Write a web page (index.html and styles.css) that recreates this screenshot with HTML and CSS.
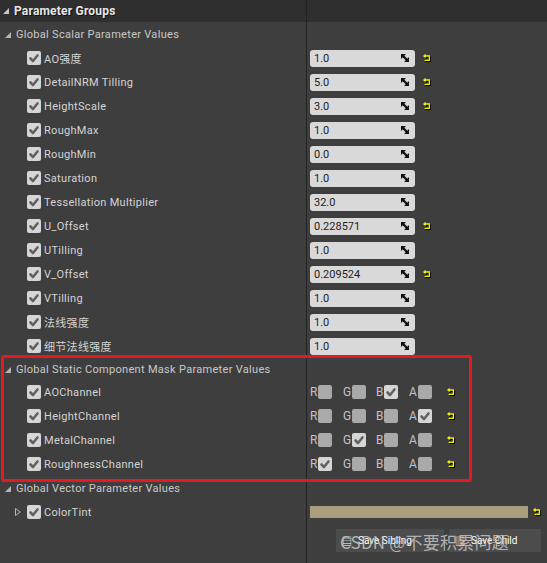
FILE: index.html
```html
<!DOCTYPE html>
<html>
<head>
<meta charset="utf-8">
<link rel="stylesheet" href="styles.css">
</head>
<body>
<div class="panel">
  <div class="header">
    <div class="hl"><svg class="tri" width="6" height="6" viewBox="0 0 6 6"><polygon points="0,6 6,6 6,0"/></svg><span>Parameter Groups</span></div>
    <div class="hr"></div>
  </div>

  <div class="row section"><div class="l"><svg class="tri" width="6" height="6" viewBox="0 0 6 6"><polygon points="0,6 6,6 6,0"/></svg>Global Scalar Parameter Values</div><div class="r"></div></div>

  <div class="row"><div class="l"><span class="cb on"><svg viewBox="0 0 14 14"><path d="M3.5 7.5 L6 10 L10.5 4.5"/></svg></span>AO强度</div><div class="r"><div class="val">1.0<svg class="spin" viewBox="0 0 8 8"><path d="M0 0 H5 L0 5 Z M8 8 V3 L3 8 Z"/><path class="ln" d="M1 1 L7 7"/></svg></div><svg class="reset" viewBox="0 0 8 8"><path d="M2.6 0.6 L1 2 L2.6 3.4 M1 2 H6.4 V6.4 H1.6"/></svg></div></div>
  <div class="row"><div class="l"><span class="cb on"><svg viewBox="0 0 14 14"><path d="M3.5 7.5 L6 10 L10.5 4.5"/></svg></span>DetailNRM Tilling</div><div class="r"><div class="val">5.0<svg class="spin" viewBox="0 0 8 8"><path d="M0 0 H5 L0 5 Z M8 8 V3 L3 8 Z"/><path class="ln" d="M1 1 L7 7"/></svg></div><svg class="reset" viewBox="0 0 8 8"><path d="M2.6 0.6 L1 2 L2.6 3.4 M1 2 H6.4 V6.4 H1.6"/></svg></div></div>
  <div class="row"><div class="l"><span class="cb on"><svg viewBox="0 0 14 14"><path d="M3.5 7.5 L6 10 L10.5 4.5"/></svg></span>HeightScale</div><div class="r"><div class="val">3.0<svg class="spin" viewBox="0 0 8 8"><path d="M0 0 H5 L0 5 Z M8 8 V3 L3 8 Z"/><path class="ln" d="M1 1 L7 7"/></svg></div><svg class="reset" viewBox="0 0 8 8"><path d="M2.6 0.6 L1 2 L2.6 3.4 M1 2 H6.4 V6.4 H1.6"/></svg></div></div>
  <div class="row"><div class="l"><span class="cb on"><svg viewBox="0 0 14 14"><path d="M3.5 7.5 L6 10 L10.5 4.5"/></svg></span>RoughMax</div><div class="r"><div class="val">1.0<svg class="spin" viewBox="0 0 8 8"><path d="M0 0 H5 L0 5 Z M8 8 V3 L3 8 Z"/><path class="ln" d="M1 1 L7 7"/></svg></div></div></div>
  <div class="row"><div class="l"><span class="cb on"><svg viewBox="0 0 14 14"><path d="M3.5 7.5 L6 10 L10.5 4.5"/></svg></span>RoughMin</div><div class="r"><div class="val">0.0<svg class="spin" viewBox="0 0 8 8"><path d="M0 0 H5 L0 5 Z M8 8 V3 L3 8 Z"/><path class="ln" d="M1 1 L7 7"/></svg></div></div></div>
  <div class="row"><div class="l"><span class="cb on"><svg viewBox="0 0 14 14"><path d="M3.5 7.5 L6 10 L10.5 4.5"/></svg></span>Saturation</div><div class="r"><div class="val">1.0<svg class="spin" viewBox="0 0 8 8"><path d="M0 0 H5 L0 5 Z M8 8 V3 L3 8 Z"/><path class="ln" d="M1 1 L7 7"/></svg></div></div></div>
  <div class="row"><div class="l"><span class="cb on"><svg viewBox="0 0 14 14"><path d="M3.5 7.5 L6 10 L10.5 4.5"/></svg></span>Tessellation Multiplier</div><div class="r"><div class="val">32.0<svg class="spin" viewBox="0 0 8 8"><path d="M0 0 H5 L0 5 Z M8 8 V3 L3 8 Z"/><path class="ln" d="M1 1 L7 7"/></svg></div></div></div>
  <div class="row"><div class="l"><span class="cb on"><svg viewBox="0 0 14 14"><path d="M3.5 7.5 L6 10 L10.5 4.5"/></svg></span>U_Offset</div><div class="r"><div class="val">0.228571<svg class="spin" viewBox="0 0 8 8"><path d="M0 0 H5 L0 5 Z M8 8 V3 L3 8 Z"/><path class="ln" d="M1 1 L7 7"/></svg></div><svg class="reset" viewBox="0 0 8 8"><path d="M2.6 0.6 L1 2 L2.6 3.4 M1 2 H6.4 V6.4 H1.6"/></svg></div></div>
  <div class="row"><div class="l"><span class="cb on"><svg viewBox="0 0 14 14"><path d="M3.5 7.5 L6 10 L10.5 4.5"/></svg></span>UTilling</div><div class="r"><div class="val">1.0<svg class="spin" viewBox="0 0 8 8"><path d="M0 0 H5 L0 5 Z M8 8 V3 L3 8 Z"/><path class="ln" d="M1 1 L7 7"/></svg></div></div></div>
  <div class="row"><div class="l"><span class="cb on"><svg viewBox="0 0 14 14"><path d="M3.5 7.5 L6 10 L10.5 4.5"/></svg></span>V_Offset</div><div class="r"><div class="val">0.209524<svg class="spin" viewBox="0 0 8 8"><path d="M0 0 H5 L0 5 Z M8 8 V3 L3 8 Z"/><path class="ln" d="M1 1 L7 7"/></svg></div><svg class="reset" viewBox="0 0 8 8"><path d="M2.6 0.6 L1 2 L2.6 3.4 M1 2 H6.4 V6.4 H1.6"/></svg></div></div>
  <div class="row"><div class="l"><span class="cb on"><svg viewBox="0 0 14 14"><path d="M3.5 7.5 L6 10 L10.5 4.5"/></svg></span>VTilling</div><div class="r"><div class="val">1.0<svg class="spin" viewBox="0 0 8 8"><path d="M0 0 H5 L0 5 Z M8 8 V3 L3 8 Z"/><path class="ln" d="M1 1 L7 7"/></svg></div></div></div>
  <div class="row"><div class="l"><span class="cb on"><svg viewBox="0 0 14 14"><path d="M3.5 7.5 L6 10 L10.5 4.5"/></svg></span>法线强度</div><div class="r"><div class="val">1.0<svg class="spin" viewBox="0 0 8 8"><path d="M0 0 H5 L0 5 Z M8 8 V3 L3 8 Z"/><path class="ln" d="M1 1 L7 7"/></svg></div></div></div>
  <div class="row"><div class="l"><span class="cb on"><svg viewBox="0 0 14 14"><path d="M3.5 7.5 L6 10 L10.5 4.5"/></svg></span>细节法线强度</div><div class="r"><div class="val">1.0<svg class="spin" viewBox="0 0 8 8"><path d="M0 0 H5 L0 5 Z M8 8 V3 L3 8 Z"/><path class="ln" d="M1 1 L7 7"/></svg></div></div></div>

  <div class="row section short"><div class="l"><svg class="tri" width="6" height="6" viewBox="0 0 6 6"><polygon points="0,6 6,6 6,0"/></svg>Global Static Component Mask Parameter Values</div><div class="r"></div></div>

  <div class="row mask"><div class="l"><span class="cb on"><svg viewBox="0 0 14 14"><path d="M3.5 7.5 L6 10 L10.5 4.5"/></svg></span>AOChannel</div><div class="r">
    <span class="ch">R<span class="cb off"></span></span><span class="ch">G<span class="cb off"></span></span><span class="ch">B<span class="cb on"><svg viewBox="0 0 14 14"><path d="M3.5 7.5 L6 10 L10.5 4.5"/></svg></span></span><span class="ch">A<span class="cb off"></span></span><svg class="reset" viewBox="0 0 8 8"><path d="M2.6 0.6 L1 2 L2.6 3.4 M1 2 H6.4 V6.4 H1.6"/></svg>
  </div></div>
  <div class="row mask"><div class="l"><span class="cb on"><svg viewBox="0 0 14 14"><path d="M3.5 7.5 L6 10 L10.5 4.5"/></svg></span>HeightChannel</div><div class="r">
    <span class="ch">R<span class="cb off"></span></span><span class="ch">G<span class="cb off"></span></span><span class="ch">B<span class="cb off"></span></span><span class="ch">A<span class="cb on"><svg viewBox="0 0 14 14"><path d="M3.5 7.5 L6 10 L10.5 4.5"/></svg></span></span><svg class="reset" viewBox="0 0 8 8"><path d="M2.6 0.6 L1 2 L2.6 3.4 M1 2 H6.4 V6.4 H1.6"/></svg>
  </div></div>
  <div class="row mask"><div class="l"><span class="cb on"><svg viewBox="0 0 14 14"><path d="M3.5 7.5 L6 10 L10.5 4.5"/></svg></span>MetalChannel</div><div class="r">
    <span class="ch">R<span class="cb off"></span></span><span class="ch">G<span class="cb on"><svg viewBox="0 0 14 14"><path d="M3.5 7.5 L6 10 L10.5 4.5"/></svg></span></span><span class="ch">B<span class="cb off"></span></span><span class="ch">A<span class="cb off"></span></span><svg class="reset" viewBox="0 0 8 8"><path d="M2.6 0.6 L1 2 L2.6 3.4 M1 2 H6.4 V6.4 H1.6"/></svg>
  </div></div>
  <div class="row mask"><div class="l"><span class="cb on"><svg viewBox="0 0 14 14"><path d="M3.5 7.5 L6 10 L10.5 4.5"/></svg></span>RoughnessChannel</div><div class="r">
    <span class="ch">R<span class="cb on"><svg viewBox="0 0 14 14"><path d="M3.5 7.5 L6 10 L10.5 4.5"/></svg></span></span><span class="ch">G<span class="cb off"></span></span><span class="ch">B<span class="cb off"></span></span><span class="ch">A<span class="cb off"></span></span><svg class="reset" viewBox="0 0 8 8"><path d="M2.6 0.6 L1 2 L2.6 3.4 M1 2 H6.4 V6.4 H1.6"/></svg>
  </div></div>

  <div class="row section"><div class="l"><svg class="tri" width="6" height="6" viewBox="0 0 6 6"><polygon points="0,6 6,6 6,0"/></svg>Global Vector Parameter Values</div><div class="r"></div></div>

  <div class="row vec"><div class="l"><svg class="exp" width="6" height="8" viewBox="0 0 6 8"><path d="M0.5 0.5 L5.2 4 L0.5 7.5 Z"/></svg><span class="cb on"><svg viewBox="0 0 14 14"><path d="M3.5 7.5 L6 10 L10.5 4.5"/></svg></span>ColorTint</div><div class="r"><div class="color"></div><svg class="reset" viewBox="0 0 8 8"><path d="M2.6 0.6 L1 2 L2.6 3.4 M1 2 H6.4 V6.4 H1.6"/></svg></div></div>

  <div class="row footer"><div class="l"></div><div class="r">
    <div class="btn b1"><span class="bi">▤</span>Save Sibling</div>
    <div class="btn b2"><span class="bi">▥</span>Save Child</div>
  </div></div>

  <div class="highlight"></div>
  <div class="watermark">CSDN @不要积累问题</div>
</div>
</body>
</html>
```

FILE: styles.css
```css
html, body {
  margin: 0;
  padding: 0;
  background: #3e3e3e;
}
body {
  width: 547px;
  height: 563px;
  overflow: hidden;
  font-family: Roboto, "Noto Sans CJK SC", sans-serif;
  font-size: 11px;
  letter-spacing: 0.3px;
  color: #d4d4d4;
}
.panel {
  position: relative;
  width: 547px;
  height: 563px;
  display: flex;
  flex-direction: column;
}
.header {
  height: 22px;
  background: #2f2f2f;
  display: flex;
}
.header .hl {
  width: 306px;
  display: flex;
  align-items: center;
  padding-left: 3px;
  box-sizing: border-box;
  font-weight: bold;
  font-size: 12px;
  letter-spacing: 0.2px;
  color: #e6e6e6;
  text-shadow: 1px 1px 0 #111;
}
.header .hl .tri { margin-right: 5px; fill: #c8c8c8; }
.header .hr {
  flex: 1;
  border-left: 1px solid #222;
}
.row {
  display: flex;
  height: 24px;
}
.row.short { height: 22px; }
.row .l {
  width: 306px;
  box-sizing: border-box;
  display: flex;
  align-items: center;
  padding-left: 27px;
  white-space: nowrap;
}
.row .r {
  flex: 1;
  border-left: 1px solid #232323;
  display: flex;
  align-items: center;
  padding-left: 3px;
}
.section .l {
  padding-left: 5px;
  color: #c9c9c9;
}
.section .tri {
  fill: #b4b4b4;
  margin-right: 5px;
  margin-top: 2px;
}
.cb {
  width: 14px;
  height: 14px;
  border-radius: 2px;
  flex: none;
  display: inline-flex;
}
.cb.on { background: #d6d6d6; }
.cb.off { background: #a9a9a9; }
.cb svg {
  width: 14px;
  height: 14px;
  fill: none;
  stroke: #626262;
  stroke-width: 2.6;
  stroke-linecap: round;
  stroke-linejoin: round;
}
.l .cb { margin-right: 3px; }
.val {
  width: 105px;
  height: 17px;
  box-sizing: border-box;
  background: #d9d9d9;
  border-radius: 3px;
  color: #1e1e1e;
  letter-spacing: 0;
  display: flex;
  align-items: center;
  justify-content: space-between;
  padding: 0 6px 0 4px;
}
.spin { width: 8px; height: 8px; }
.spin path { fill: #111; }
.spin path.ln { fill: none; stroke: #111; stroke-width: 2.4; }
.reset {
  width: 8px;
  height: 8px;
  margin-left: 8px;
  fill: none;
  stroke: #f2f200;
  stroke-width: 1.3;
  filter: drop-shadow(1px 1px 0 #000);
}
.ch {
  display: inline-flex;
  align-items: center;
  width: 33px;
  color: #c4c4c4;
  font-size: 12px;
  letter-spacing: 0;
}
.ch .cb { margin-left: 1px; }
.mask .r .reset { margin-left: 5px; }
.vec .l { padding-left: 15px; }
.exp {
  fill: none;
  stroke: #b8b8b8;
  stroke-width: 1;
  margin-right: 6px;
}
.color {
  width: 218px;
  height: 12px;
  background: #aa9f7d;
}
.vec .r .reset { margin-left: 5px; }
.footer { flex: 1; height: auto; }
.footer .r {
  align-items: flex-start;
  justify-content: flex-end;
  padding: 5px 6px 0 0;
  gap: 5px;
}
.btn {
  height: 23px;
  background: #4c4c4c;
  color: #ffffff;
  font-size: 10px;
  letter-spacing: 0;
  display: flex;
  align-items: center;
  padding-left: 6px;
  box-sizing: border-box;
}
.btn.b1 { width: 108px; }
.btn.b2 { width: 92px; }
.bi { margin-right: 6px; font-size: 10px; }
.highlight {
  position: absolute;
  left: 1px;
  top: 355px;
  width: 471px;
  height: 127px;
  box-sizing: border-box;
  border: 3px solid #e11a24;
  border-radius: 3px;
}
.watermark {
  position: absolute;
  left: 340px;
  top: 529px;
  font-family: "Noto Sans CJK SC", sans-serif;
  font-size: 17px;
  letter-spacing: 0.2px;
  color: rgba(205, 205, 205, 0.8);
  white-space: nowrap;
}
```
